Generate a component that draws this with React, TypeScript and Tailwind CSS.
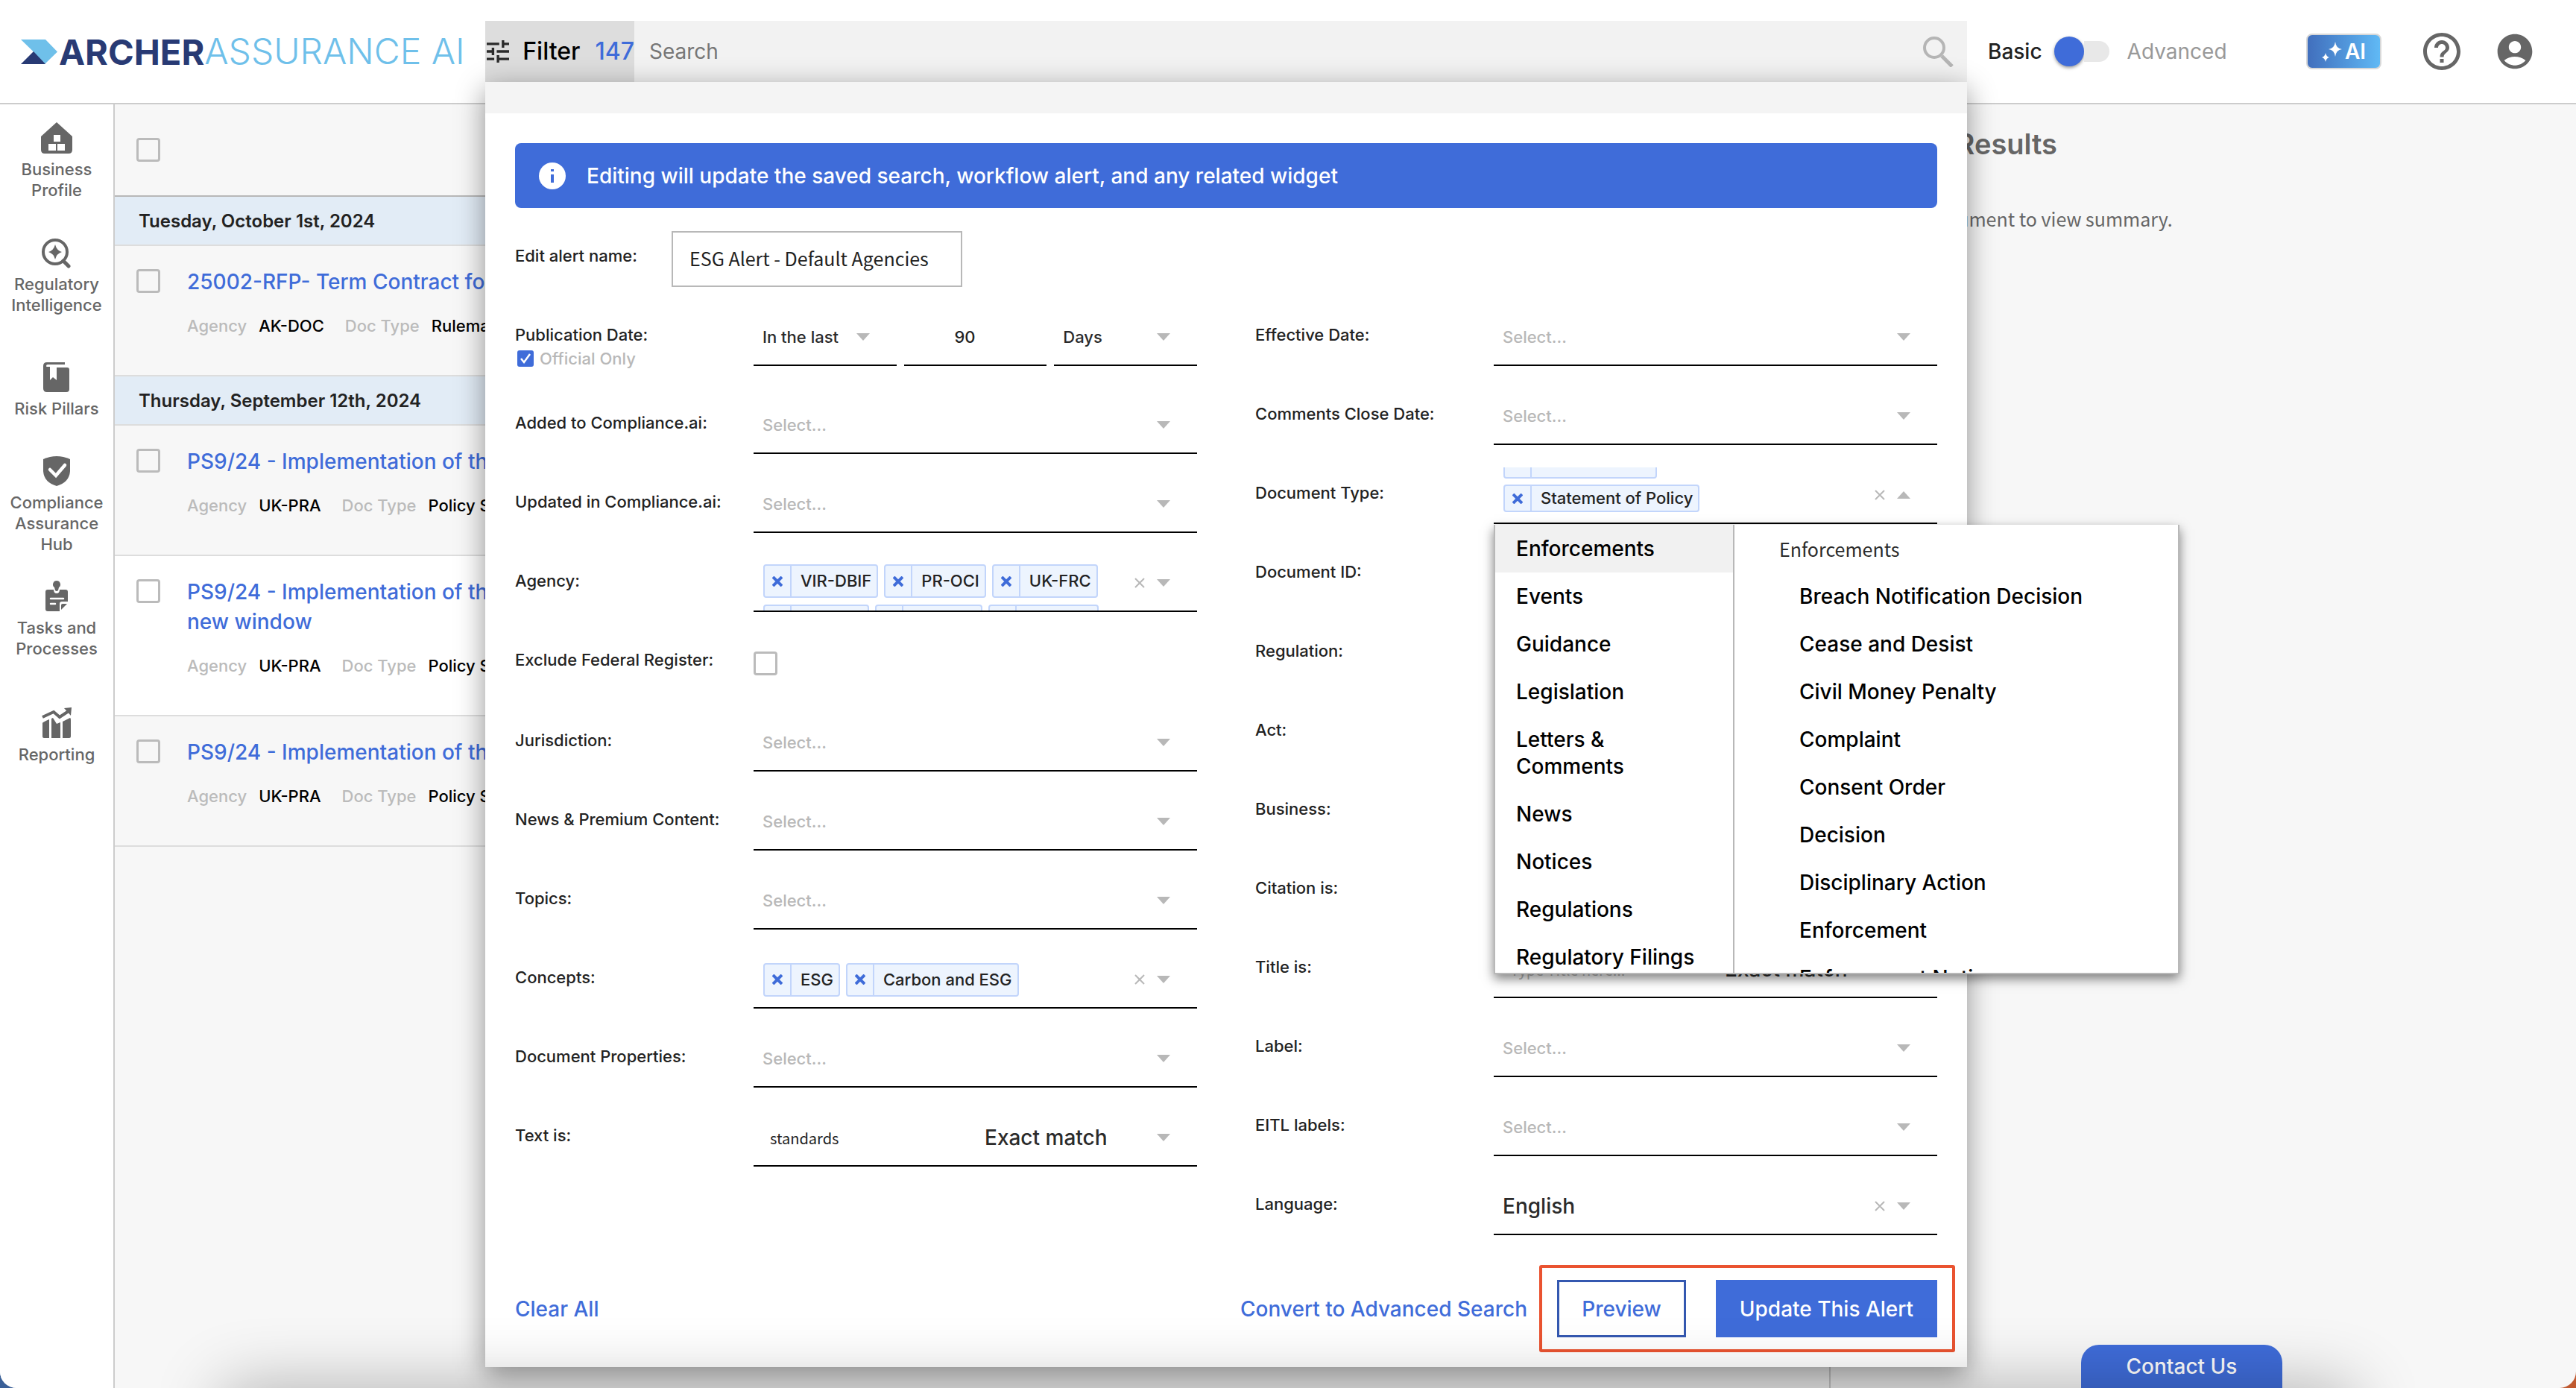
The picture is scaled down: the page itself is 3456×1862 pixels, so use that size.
import React, { useState } from 'react';
import { MdAccountCircle, MdHelpOutline } from 'react-icons/md';

interface IconProps {
  className?: string;
}

const HomeIcon: React.FC<IconProps> = ({ className }) => (
  <svg viewBox="0 0 42 42" className={className} fill="currentColor" aria-hidden="true">
    <path fillRule="evenodd" d="M21 0 42 19v18q0 5-5 5H5q-5 0-5-5V19ZM17 17v9h9v-9ZM10 29v9h10v-9ZM22 29v9h10v-9Z" />
  </svg>
);

const InsightIcon: React.FC<IconProps> = ({ className }) => (
  <svg viewBox="0 0 42 42" className={className} fill="currentColor" aria-hidden="true">
    <circle cx="19" cy="20" r="16" fill="none" stroke="currentColor" strokeWidth="4" />
    <path d="m30 32 7 7" stroke="currentColor" strokeWidth="5" strokeLinecap="round" />
    <path d="M19 10q2 8 9 10-7 2-9 10-2-8-9-10 7-2 9-10Z" />
  </svg>
);

const BookIcon: React.FC<IconProps> = ({ className }) => (
  <svg viewBox="0 0 42 42" className={className} fill="currentColor" aria-hidden="true">
    <path d="M8 1h24v3H9q-2 0-2 2 0 1 1 1h4v18l4-4 5 4V8h14q3 0 3 3v26q0 4-4 4H8q-5 0-5-5V6q0-5 5-5Z" />
  </svg>
);

const ShieldIcon: React.FC<IconProps> = ({ className }) => (
  <svg viewBox="0 0 42 42" className={className} aria-hidden="true">
    <path fill="currentColor" d="M3 5q18-8 36 0v16q-1 15-18 20Q4 36 3 21Z" />
    <path d="m12 19 8 8 12-14" fill="none" stroke="#fff" strokeWidth="4.5" strokeLinecap="round" />
  </svg>
);

const TaskIcon: React.FC<IconProps> = ({ className }) => (
  <svg viewBox="0 0 42 42" className={className} aria-hidden="true">
    <path fill="currentColor" d="M9 12h8q0 5 4 5t4-5h8q3 0 3 3v13h-8q-3 0-3 3v10H9q-3 0-3-3V15q0-3 3-3Z" />
    <path fill="currentColor" d="M27 39v-6q0-2 2-2h6Z" />
    <path fill="currentColor" d="M21 0a5 5 0 0 1 3 9l-1 4q-2 2-4 0l-1-4a5 5 0 0 1 3-9Z" />
    <path d="M13 24h17M13 31h6" stroke="#fff" strokeWidth="2.5" strokeLinecap="round" />
  </svg>
);

const ChartIcon: React.FC<IconProps> = ({ className }) => (
  <svg viewBox="0 0 42 42" className={className} fill="currentColor" aria-hidden="true">
    <path d="M2 13 17 6l8 7 12-8" fill="none" stroke="currentColor" strokeWidth="4" />
    <path d="m31 1 10-1-1 11Z" />
    <path d="M2 21q0-1 9-5v25H4q-2 0-2-2ZM14 15l2-1 5 8 5-2v21H14ZM29 19l10-5q1 0 1 3v22q0 2-2 2h-9Z" />
  </svg>
);

const TuneIcon: React.FC<IconProps> = ({ className }) => (
  <svg viewBox="3 3 18 18" className={className} fill="currentColor" aria-hidden="true">
    <path d="M3 17v2h6v-2H3zM3 5v2h10V5H3zm10 16v-2h8v-2h-8v-2h-2v6h2zM7 9v2H3v2h4v2h2V9H7zm14 4v-2H11v2h10zm-6-4h2V7h4V5h-4V3h-2v6z" />
  </svg>
);

const SearchIcon: React.FC<IconProps> = ({ className }) => (
  <svg viewBox="0 0 41 41" className={className} fill="none" stroke="currentColor" aria-hidden="true">
    <circle cx="15" cy="15" r="13" strokeWidth="4" />
    <path d="m25 26 14 14" strokeWidth="5" />
  </svg>
);

const SparkleIcon: React.FC<IconProps> = ({ className }) => (
  <svg viewBox="0 0 27 27" className={className} fill="currentColor" aria-hidden="true">
    <path d="M18 0q1 9 9 10-8 1-9 10-1-9-9-10 8-1 9-10ZM5 15q1 5 5 6-4 1-5 6-1-5-5-6 4-1 5-6Z" />
  </svg>
);

const Caret: React.FC<{ up?: boolean }> = ({ up }) => (
  <svg viewBox="0 0 18 10" className="pointer-events-none h-[10px] w-[18px] shrink-0 text-[#b8b8b8]" fill="currentColor" aria-hidden="true">
    <path d={up ? 'M0 10h18L9 0Z' : 'M0 0h18L9 10Z'} />
  </svg>
);

const ClearButton: React.FC<{ label: string }> = ({ label }) => (
  <button type="button" aria-label={`Clear ${label}`} className="mr-4 shrink-0 text-[#b8b8b8]">
    <svg viewBox="0 0 14 14" className="h-[14px] w-[14px]" stroke="currentColor" strokeWidth="2" aria-hidden="true">
      <path d="m1 1 12 12M13 1 1 13" />
    </svg>
  </button>
);

const navItems = [
  { label: 'Business Profile', icon: HomeIcon, spacing: 'pb-[49px]' },
  { label: 'Regulatory Intelligence', icon: InsightIcon, spacing: 'pb-[62px]' },
  { label: 'Risk Pillars', icon: BookIcon, spacing: 'pb-[49px]' },
  { label: 'Compliance Assurance Hub', icon: ShieldIcon, spacing: 'pb-[35px]' },
  { label: 'Tasks and Processes', icon: TaskIcon, spacing: 'pb-[65px]' },
  { label: 'Reporting', icon: ChartIcon, spacing: '' },
];

const documentGroups = [
  {
    date: 'Tuesday, October 1st, 2024',
    docs: [{ title: ['25002-RFP- Term Contract for'], agency: 'AK-DOC', type: 'Rulemaking', shade: 'bg-[#f7f7f7]' }],
  },
  {
    date: 'Thursday, September 12th, 2024',
    docs: [
      { title: ['PS9/24 - Implementation of the'], agency: 'UK-PRA', type: 'Policy Statement', shade: 'bg-[#f7f7f7]' },
      { title: ['PS9/24 - Implementation of the', 'new window'], agency: 'UK-PRA', type: 'Policy Statement', shade: 'bg-white' },
      { title: ['PS9/24 - Implementation of the'], agency: 'UK-PRA', type: 'Policy Statement', shade: 'bg-[#f7f7f7]' },
    ],
  },
];

const categories = [
  'Enforcements',
  'Events',
  'Guidance',
  'Legislation',
  'Letters & Comments',
  'News',
  'Notices',
  'Regulations',
  'Regulatory Filings',
];

const enforcementTypes = [
  'Breach Notification Decision',
  'Cease and Desist',
  'Civil Money Penalty',
  'Complaint',
  'Consent Order',
  'Decision',
  'Disciplinary Action',
  'Enforcement',
  'Enforcement Notice',
];

const checkboxClass = 'h-8 w-8 shrink-0 appearance-none rounded-[4px] border-[3px] border-[#bbbbbb] bg-transparent';
const fieldClass = 'flex h-[76px] min-w-0 flex-1 items-center border-b-2 border-black';

// Label on the left, control on the right
const Row: React.FC<{ label: string; id: string; extra?: React.ReactNode; className?: string; children: React.ReactNode }> = ({
  label,
  id,
  extra,
  className = 'h-[106px]',
  children,
}) => (
  <div className={`flex items-start pt-[30px] ${className}`}>
    <div className="w-[320px] shrink-0 pt-5">
      <label htmlFor={id} className="block leading-7">
        {label}
      </label>
      {extra}
    </div>
    {children}
  </div>
);

const SelectField: React.FC<{ id: string; value?: string; large?: boolean; clearable?: boolean }> = ({ id, value, large, clearable }) => (
  <div className={`${fieldClass} pr-9`}>
    <select
      id={id}
      className={`h-full min-w-0 flex-1 appearance-none bg-transparent pl-3 outline-none ${large ? 'text-[28px]' : 'text-[22px]'} ${
        value ? 'text-[#2b2b2b]' : 'text-[#b8b8b8]'
      }`}
    >
      <option>{value || 'Select...'}</option>
    </select>
    {clearable && <ClearButton label={id} />}
    <Caret />
  </div>
);

const Chip: React.FC<{ text: string }> = ({ text }) => (
  <span className="flex h-[45px] items-center rounded-[4px] border-2 border-[#c2d5fb] bg-[#edf4fe]">
    <button type="button" aria-label={`Remove ${text}`} className="flex h-full w-9 items-center justify-center border-r-2 border-[#c2d5fb] text-[#3f6cd9]">
      <svg viewBox="0 0 14 14" className="h-[14px] w-[14px]" stroke="currentColor" strokeWidth="4" aria-hidden="true">
        <path d="m1 1 12 12M13 1 1 13" />
      </svg>
    </button>
    <span className="whitespace-nowrap pl-3 pr-[7px]">{text}</span>
  </span>
);

// Chip that is scrolled out of its field, only an edge of it shows
const ChipEdge: React.FC<{ width: string }> = ({ width }) => (
  <span className={`flex h-[45px] shrink-0 rounded-[4px] border-2 border-[#c2d5fb] bg-[#edf4fe] ${width}`}>
    <span className="w-9 border-r-2 border-[#c2d5fb]" />
  </span>
);

const MatchField: React.FC<{ id: string; value?: string; placeholder?: string }> = ({ id, value, placeholder }) => (
  <div className={`${fieldClass} pr-9`}>
    <input
      id={id}
      type="text"
      defaultValue={value}
      placeholder={placeholder}
      className="h-full w-[310px] bg-transparent pl-[22px] font-['Noto_Sans_CJK_SC','Noto_Sans',sans-serif] text-[20px] font-normal outline-none placeholder:text-[#b8b8b8]"
    />
    <select aria-label={`${id} match`} className="h-full min-w-0 flex-1 appearance-none bg-transparent text-[28px] text-[#2b2b2b] outline-none">
      <option>Exact match</option>
    </select>
    <Caret />
  </div>
);

const DocumentTypeMenu: React.FC = () => {
  const [active, setActive] = useState('Enforcements');

  return (
    <div className="absolute left-0 top-full z-20 mt-[3px] flex h-[603px] w-[920px] overflow-hidden border-2 border-t-0 border-[#b8b8b8] bg-white text-[28px] leading-9 text-black shadow-[0_6px_14px_rgba(0,0,0,0.5)]">
      <ul className="w-[321px] shrink-0 border-r-2 border-[#b8b8b8]">
        {categories.map((category) => (
          <li key={category}>
            <button
              type="button"
              onClick={() => setActive(category)}
              className={`w-full py-[14px] pl-7 pr-10 text-left ${category === active ? 'bg-[#f1f1f1]' : ''}`}
            >
              {category}
            </button>
          </li>
        ))}
      </ul>
      <div className="min-w-0 flex-1">
        <p className="py-[14px] pl-[60px] font-['Noto_Sans_CJK_SC','Noto_Sans',sans-serif] text-[25px] font-normal text-[#2b2b2b]">Enforcements</p>
        <ul>
          {enforcementTypes.map((type) => (
            <li key={type}>
              <button type="button" className="w-full py-[14px] pl-[87px] text-left">
                {type}
              </button>
            </li>
          ))}
        </ul>
      </div>
    </div>
  );
};

const FilterPanel: React.FC = () => (
  <div className="absolute inset-x-0 top-full z-10 bg-white text-[22px] font-medium text-[#222222] shadow-[0_10px_36px_rgba(0,0,0,0.42)]">
    <div className="h-[42px] bg-[#f4f4f4]" />
    <form className="px-10 py-10">
      <div className="flex h-[87px] items-center rounded-lg bg-[#3f6cd9] pl-8 text-[28px] text-white">
        <svg viewBox="0 0 36 36" className="mr-7 h-9 w-9" aria-hidden="true">
          <circle cx="18" cy="18" r="18" fill="#fff" />
          <path d="M18 16v11M18 9v3" stroke="#3f6cd9" strokeWidth="4" />
        </svg>
        Editing will update the saved search, workflow alert, and any related widget
      </div>

      <div className="mt-[31px] flex items-center">
        <label htmlFor="alert-name" className="w-[210px] pb-2">
          Edit alert name:
        </label>
        <input
          id="alert-name"
          type="text"
          defaultValue="ESG Alert - Default Agencies"
          className="h-[75px] w-[390px] border-2 border-[#b8b8b8] px-[22px] pb-1 font-['Noto_Sans_CJK_SC','Noto_Sans',sans-serif] text-[25px] font-normal outline-none"
        />
      </div>

      <div className="grid grid-cols-2 gap-x-[78px]">
        <div>
          <Row
            label="Publication Date:"
            id="publication-date"
            className="mb-3 h-[106px]"
            extra={
              <label className="mt-1 flex items-center leading-7 text-[#b8b8b8]">
                <input type="checkbox" defaultChecked className="peer sr-only" />
                <svg viewBox="0 0 22 22" className="mx-[3px] mr-2 h-[22px] w-[22px]" aria-hidden="true">
                  <rect width="22" height="22" rx="3" fill="#3f6cd9" />
                  <path d="m5 11 4 5 8-11" fill="none" stroke="#fff" strokeWidth="2.5" />
                </svg>
                Official Only
              </label>
            }
          >
            <div className="grid min-w-0 flex-1 grid-cols-3 gap-[10px]">
              <SelectField id="publication-date" value="In the last" />
              <input
                type="text"
                inputMode="numeric"
                aria-label="Amount"
                defaultValue="90"
                className="h-[76px] min-w-0 border-b-2 border-black pr-7 text-center outline-none"
              />
              <SelectField id="publication-unit" value="Days" />
            </div>
          </Row>
          <Row label="Added to Compliance.ai:" id="added">
            <SelectField id="added" />
          </Row>
          <Row label="Updated in Compliance.ai:" id="updated">
            <SelectField id="updated" />
          </Row>
          <Row label="Agency:" id="agency">
            <div id="agency" className={`${fieldClass} pr-9`}>
              <div className="flex h-full min-w-0 flex-1 flex-wrap content-start gap-x-2 gap-y-[9px] overflow-hidden pl-[13px] pt-3">
                <Chip text="VIR-DBIF" />
                <Chip text="PR-OCI" />
                <Chip text="UK-FRC" />
                <ChipEdge width="w-[142px]" />
                <ChipEdge width="w-[144px]" />
                <ChipEdge width="w-[148px]" />
              </div>
              <ClearButton label="agency" />
              <Caret />
            </div>
          </Row>
          <Row label="Exclude Federal Register:" id="exclude-fr" className="h-[108px]">
            <input id="exclude-fr" type="checkbox" className={`mt-[23px] ${checkboxClass}`} />
          </Row>
          <Row label="Jurisdiction:" id="jurisdiction">
            <SelectField id="jurisdiction" />
          </Row>
          <Row label="News & Premium Content:" id="news">
            <SelectField id="news" />
          </Row>
          <Row label="Topics:" id="topics">
            <SelectField id="topics" />
          </Row>
          <Row label="Concepts:" id="concepts">
            <div id="concepts" className={`${fieldClass} pr-9`}>
              <div className="flex min-w-0 flex-1 gap-2 pl-[13px]">
                <Chip text="ESG" />
                <Chip text="Carbon and ESG" />
              </div>
              <ClearButton label="concepts" />
              <Caret />
            </div>
          </Row>
          <Row label="Document Properties:" id="properties">
            <SelectField id="properties" />
          </Row>
          <Row label="Text is:" id="text-is">
            <MatchField id="text-is" value="standards" />
          </Row>
        </div>

        <div>
          <Row label="Effective Date:" id="effective">
            <SelectField id="effective" />
          </Row>
          <Row label="Comments Close Date:" id="comments-close">
            <SelectField id="comments-close" />
          </Row>
          <Row label="Document Type:" id="document-type">
            <div id="document-type" className={`relative pr-9 ${fieldClass}`}>
              <div className="flex h-full min-w-0 flex-1 flex-col items-start justify-end gap-2 overflow-hidden pb-[14px] pl-[13px]">
                <ChipEdge width="w-[206px]" />
                <Chip text="Statement of Policy" />
              </div>
              <ClearButton label="document type" />
              <Caret up />
              <DocumentTypeMenu />
            </div>
          </Row>
          <Row label="Document ID:" id="document-id">
            <SelectField id="document-id" />
          </Row>
          <Row label="Regulation:" id="regulation">
            <SelectField id="regulation" />
          </Row>
          <Row label="Act:" id="act">
            <SelectField id="act" />
          </Row>
          <Row label="Business:" id="business">
            <SelectField id="business" />
          </Row>
          <Row label="Citation is:" id="citation">
            <SelectField id="citation" />
          </Row>
          <Row label="Title is:" id="title-is">
            <MatchField id="title-is" placeholder="Type Title here..." />
          </Row>
          <Row label="Label:" id="label">
            <SelectField id="label" />
          </Row>
          <Row label="EITL labels:" id="eitl">
            <SelectField id="eitl" />
          </Row>
          <Row label="Language:" id="language">
            <SelectField id="language" value="English" large clearable />
          </Row>
        </div>
      </div>

      <div className="mt-[60px] flex items-center justify-between text-[28px] text-[#3f6cd9]">
        <button type="button">Clear All</button>
        <div className="flex items-center gap-10">
          <button type="button">Convert to Advanced Search</button>
          <div className="relative flex gap-10">
            <button type="button" className="h-[77px] w-[173px] border-[3px] border-[#3458b0]">
              Preview
            </button>
            <button type="submit" className="h-[77px] w-[297px] bg-[#3f6cd9] text-white">
              Update This Alert
            </button>
            <div className="pointer-events-none absolute -inset-x-6 -inset-y-5 rounded-[3px] border-4 border-[#ea5330]" />
          </div>
        </div>
      </div>
    </form>
  </div>
);

const Header: React.FC = () => (
  <header className="relative z-10 flex h-[140px] items-start border-b-2 border-[#cccccc] bg-white">
    {/* Logo */}
    <a href="#" className="flex h-[138px] w-[651px] shrink-0 items-center whitespace-nowrap pl-7">
      <svg viewBox="0 0 49 33" className="h-[33px] w-[49px]" aria-hidden="true">
        <path d="M0 0h33l16 16.500L32 33 17 16.500Z" fill="#6fc0ea" />
        <path d="M17 16 33 33H0Z" fill="#283a74" />
      </svg>
      <span className="pl-[2px] text-[47px] font-bold leading-none text-[#283a74]">ARCHER</span>
      <span className="text-[48px] font-light leading-none text-[#6fc0ea]">ASSURANCE AI</span>
    </a>

    {/* Search bar */}
    <div className="relative mt-7 flex h-[82px] min-w-0 flex-1 bg-[#f2f2f2]">
      <button type="button" className="flex w-[200px] shrink-0 items-center whitespace-nowrap bg-[#dddddd] pl-[2px] text-[32px] font-medium text-black">
        <TuneIcon className="mr-[18px] h-9 w-9 text-[#2b2b2b]" />
        Filter
        <span className="pl-5 text-[#3f6cd9]">147</span>
      </button>
      <input
        type="search"
        aria-label="Search"
        placeholder="Search"
        className="min-w-0 flex-1 bg-transparent px-5 text-[28px] outline-none placeholder:text-[#777777]"
      />
      <button type="button" aria-label="Run search" className="pr-[18px] text-[#b5b5b5]">
        <SearchIcon className="h-[41px] w-[41px]" />
      </button>
      <FilterPanel />
    </div>

    {/* Mode toggle and account */}
    <div className="flex h-[138px] w-[817px] shrink-0 items-center pl-7 text-[28px]">
      <span className="font-medium text-[#222222]">Basic</span>
      <button type="button" role="switch" aria-checked="false" aria-label="Advanced search" className="ml-4 flex h-10 w-[74px] items-center">
        <span className="h-10 w-10 rounded-full bg-[#3f6cd9] shadow-[0_2px_4px_rgba(0,0,0,0.4)]" />
        <span className="h-7 flex-1 rounded-r-full bg-[#e8e8e8]" />
      </button>
      <span className="pl-6 text-[#999999]">Advanced</span>
      <button
        type="button"
        className="ml-auto flex h-12 w-[101px] items-center justify-center gap-1 rounded-lg border-2 border-[#d8d8d8] bg-linear-to-r from-[#416fbd] to-[#60b9f5] font-semibold text-white"
      >
        <SparkleIcon className="h-[27px] w-[27px]" />
        AI
      </button>
      <button type="button" aria-label="Help" className="ml-[51px] text-[#666666]">
        <MdHelpOutline className="h-[60px] w-[60px]" />
      </button>
      <button type="button" aria-label="Account" className="ml-10 mr-[54px] text-[#666666]">
        <MdAccountCircle className="h-14 w-14" />
      </button>
    </div>
  </header>
);

const Sidebar: React.FC = () => (
  <nav className="w-[154px] shrink-0 border-r-2 border-[#cccccc] bg-white pt-6">
    {navItems.map(({ label, icon: Icon, spacing }) => (
      <a
        key={label}
        href="#"
        className={`flex flex-col items-center gap-[7px] px-2 text-center text-[22px] font-medium leading-7 text-[#666666] ${spacing}`}
      >
        <Icon className="h-[42px] w-[42px]" />
        {label}
      </a>
    ))}
  </nav>
);

const DocumentList: React.FC = () => (
  <section className="min-w-0 flex-1 border-r-2 border-[#cccccc]">
    <div className="h-[124px] border-b-2 border-[#b8b8b8] pl-[29px] pt-[45px]">
      <input type="checkbox" aria-label="Select all" className={checkboxClass} />
    </div>
    {documentGroups.map((group) => (
      <div key={group.date}>
        <h2 className="h-[66px] border-b-2 border-[#dddddd] bg-[#e2ecf6] pl-8 text-[24px] font-semibold leading-[66px] text-[#222222]">
          {group.date}
        </h2>
        {group.docs.map((doc, index) => (
          <article key={index} className={`flex border-b-2 border-[#dddddd] pb-[52px] pl-[29px] pt-7 font-medium ${doc.shade}`}>
            <input type="checkbox" aria-label={doc.title.join(' ')} className={`mt-[3px] ${checkboxClass}`} />
            <div className="pl-9">
              <a href="#" className="text-[28px] leading-10 text-[#3f6cd9]">
                {doc.title.map((line) => (
                  <span key={line} className="block">
                    {line}
                  </span>
                ))}
              </a>
              <p className="mt-[25px] flex text-[22px] leading-7 text-black">
                <span className="pr-4 text-[#bbbbbb]">Agency</span>
                <span className="pr-7">{doc.agency}</span>
                <span className="pr-4 text-[#bbbbbb]">Doc Type</span>
                <span>{doc.type}</span>
              </p>
            </div>
          </article>
        ))}
      </div>
    ))}
  </section>
);

const App: React.FC = () => (
  <div className="bg-linear-to-r from-[#3a6098] to-[#c05a30]">
    <div className="flex min-h-screen flex-col overflow-hidden rounded-b-[22px] bg-[#f7f7f7] font-['Inter',sans-serif]">
      <Header />
      <main className="flex flex-1">
        <Sidebar />
        <DocumentList />
        <section className="w-[1000px] shrink-0 px-[30px] pt-[31px] text-[#666666]">
          <h1 className="text-[38px] font-semibold leading-[44px]">Search Results</h1>
          <p className="pt-[60px] font-['Noto_Sans_CJK_SC','Noto_Sans',sans-serif] text-[25px] leading-9">Select a document to view summary.</p>
        </section>
      </main>

      <button
        type="button"
        className="fixed bottom-0 right-[394px] z-20 h-[58px] w-[270px] rounded-t-[24px] bg-[#3f6cd9] text-[28px] font-medium text-white"
      >
        Contact Us
      </button>
      {/* Shade rising from below the window */}
      <div className="pointer-events-none fixed inset-x-[300px] top-full z-30 h-24 shadow-[0_0_90px_rgba(0,0,0,0.3)]" />
    </div>
  </div>
);

export default App;
